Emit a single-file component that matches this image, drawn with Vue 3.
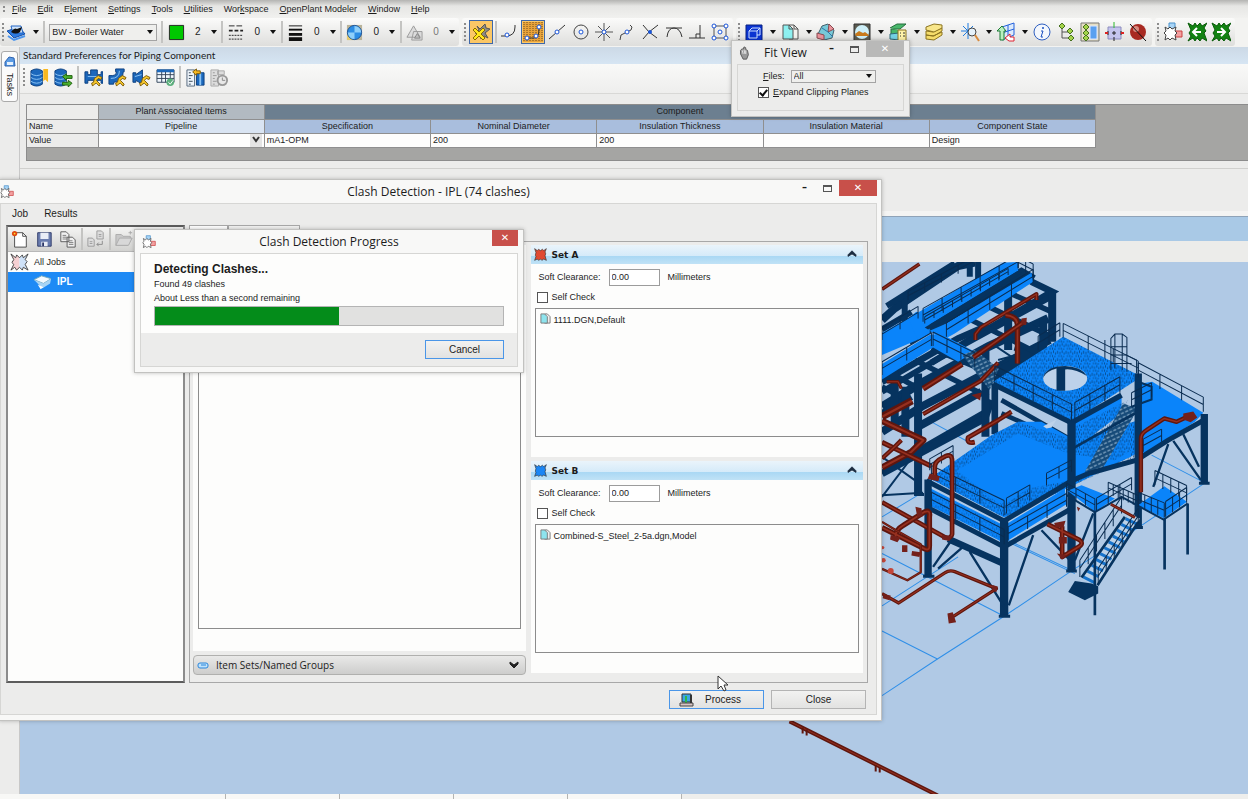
<script setup>
import { ref } from 'vue'

const menus = [
    ['', 'F', 'ile'], ['', 'E', 'dit'], ['E', 'l', 'ement'], ['', 'S', 'ettings'], ['', 'T', 'ools'],
    ['', 'U', 'tilities'], ['Wor', 'k', 'space'], ['', 'O', 'penPlant Modeler'], ['', 'W', 'indow'], ['', 'H', 'elp']
]

const attributes = [
    { icon: 'color', value: '2' },
    { icon: 'style', value: '0' },
    { icon: 'weight', value: '0' },
    { icon: 'globe', value: '0' },
    { icon: 'priority', value: '0', off: true }
]

const snaps = ['curve', 'keypoint', 'nearest', 'center', 'origin', 'bisector', 'cross', 'tangent', 'perp', 'multi']
const viewTools = ['cube', 'page', 'models', 'picture', 'levels', 'stack', 'search', 'clip']
const plainTools = ['info', 'tree', 'props', 'fence', 'stop']
const clashTools = ['clash', 'burst-left', 'burst-right']

const columns = [
    { name: 'Specification', value: 'mA1-OPM' },
    { name: 'Nominal Diameter', value: '200' },
    { name: 'Insulation Thickness', value: '200' },
    { name: 'Insulation Material', value: '' },
    { name: 'Component State', value: 'Design' }
]

const sets = ref([
    { id: 'a', title: 'Set A', color: '#e04a32', clearance: '0.00', self: false, file: '1111.DGN,Default' },
    { id: 'b', title: 'Set B', color: '#1b86f5', clearance: '0.00', self: false, file: 'Combined-S_Steel_2-5a.dgn,Model' }
])

const progress = ref(53)
const expandPlanes = ref(true)

// hand rail between two points: top rail, knee rail and posts
function rail(x1, y1, x2, y2, h, n) {
    let d = `M${x1} ${y1 - h}L${x2} ${y2 - h}M${x1} ${y1 - h / 2}L${x2} ${y2 - h / 2}`
    for (let i = 0; i <= n; i++) {
        const x = x1 + (x2 - x1) * i / n
        const y = y1 + (y2 - y1) * i / n
        d += `M${x} ${y}V${y - h}`
    }
    return d
}

function steps(x1, y1, x2, y2, w, n) {
    let d = ''
    for (let i = 0; i <= n; i++) {
        const x = x1 + (x2 - x1) * i / n
        const y = y1 + (y2 - y1) * i / n
        d += `M${x} ${y}l${w} ${w / 2}`
    }
    return d
}

const backRails = [
    rail(22, 300, 130, 235, 36, 2), rail(145, 245, 430, 85, 40, 5), rail(215, 290, 475, 130, 42, 4),
    rail(22, 405, 170, 318, 40, 2), rail(175, 318, 300, 380, 42, 3), rail(100, 180, 300, 75, 26, 4),
    rail(150, 250, 400, 105, 20, 9), rail(430, 85, 475, 108, 36, 2)
]
const frontRails = [
    rail(565, 292, 790, 405, 42, 3), rail(490, 330, 555, 290, 42, 2), rail(360, 425, 590, 540, 48, 4),
    rail(600, 535, 735, 458, 48, 3), rail(790, 412, 985, 515, 44, 3), rail(770, 500, 830, 470, 42, 2),
    rail(805, 635, 860, 605, 38, 1), rail(170, 720, 388, 825, 44, 3), rail(395, 820, 465, 780, 46, 2),
    rail(515, 735, 590, 695, 36, 2), rail(170, 800, 388, 912, 44, 3), rail(400, 900, 575, 800, 40, 3),
    rail(575, 765, 660, 812, 36, 3), rail(665, 812, 770, 750, 38, 3), rail(790, 800, 868, 832, 44, 4),
    rail(872, 830, 935, 788, 46, 3), rail(840, 735, 935, 780, 44, 4), rail(700, 760, 790, 800, 34, 6),
    rail(615, 1010, 740, 820, 50, 5), rail(670, 1030, 790, 850, 46, 5), rail(165, 690, 235, 650, 34, 2)
]

const pipes = [
    { d: 'M22 148L134 72', w: 11 },
    { d: 'M302 300V282L318 262L485 162V180', w: 12 },
    { d: 'M392 225Q428 228 428 255V370', w: 16 },
    { d: 'M296 352L452 242', w: 15 },
    { d: 'M145 446L262 372', w: 17 },
    { d: 'M145 522L318 422L370 368', w: 13 },
    { d: 'M22 530L112 482', w: 22 },
    { d: 'M36 425L70 425L80 445', w: 10 },
    { d: 'M22 542L146 600L110 635L22 682', w: 19 },
    { d: 'M22 606L170 678', w: 15 },
    { d: 'M22 655L60 620L80 600', w: 13 },
    { d: 'M180 715V682Q180 664 200 655L212 648Q232 640 232 662V882Q230 895 212 892', w: 14 },
    { d: 'M22 786L212 892', w: 14 },
    { d: 'M62 895Q60 870 85 856L150 815Q168 808 164 830V918Q164 932 150 926L22 862', w: 16 },
    { d: 'M300 606Q274 612 280 592L370 540L410 515', w: 14 },
    { d: 'M798 756V596Q798 580 815 570L868 535L905 545L950 524', w: 13 },
    { d: 'M518 852L612 898Q628 908 614 918L562 950V858', w: 14 },
    { d: 'M22 1060L72 1088L210 998Q224 988 240 994L365 1045L236 1128', w: 10 },
    { d: 'M22 986L98 1020L138 996V912L60 868L22 845', w: 7 },
    { d: 'M708 792L780 832', w: 9 }
]
</script>

<template>
    <div class="app">
        <svg class="symbols" aria-hidden="true">
            <symbol id="layers" viewBox="0 0 20 18"><path d="M1 8l7 7 11-4-6-7z" fill="#2d7be0" stroke="#174fa8" /><path d="M2 13l6 4 11-4" fill="none" stroke="#4c95ec" stroke-width="2" /><path d="M5 3h10l2 7H7z" fill="#cfe3fa" stroke="#2466c4" /><path d="M5 9q3-5 6-3l5-2-2 5q-4 3-9 0z" fill="#111" /></symbol>
            <symbol id="color" viewBox="0 0 18 18"><path d="M1.5 1.5h15v15h-15z" fill="#00c800" stroke="#222" /></symbol>
            <symbol id="style" viewBox="0 0 18 18"><path d="M2 2h15" stroke="#222" stroke-dasharray="6 2" /><path d="M2 7h15" stroke="#222" stroke-dasharray="4 2" stroke-width="2" /><path d="M2 12h15M2 16h15" stroke="#222" stroke-dasharray="2 1" /></symbol>
            <symbol id="weight" viewBox="0 0 18 18"><path d="M2 2h14" stroke="#111" /><path d="M2 6h14" stroke="#111" stroke-width="2" /><path d="M2 11h14" stroke="#111" stroke-width="3" /><path d="M2 16h14" stroke="#111" stroke-width="4" /></symbol>
            <symbol id="globe" viewBox="0 0 18 18"><path d="M1 1h16v16H1z" fill="#b9b39a" /><path d="M1 9h8v8H1z" fill="#e4ca70" /><circle cx="9" cy="9" r="7.5" fill="#2c8de4" stroke="#174f96" /><path d="M9 9V2a7 7 0 0 1 7 7zM9 9v7a7 7 0 0 1-7-7z" fill="#8fd0fa" /></symbol>
            <symbol id="priority" viewBox="0 0 18 18"><path d="M1 14L8 2l7 12zM8 8h9v9H6z" fill="#dcdcdc" stroke="#999" /><path d="M9 15l3-5 3 5z" fill="#bbb" stroke="#888" /></symbol>
            <symbol id="accudraw" viewBox="0 0 20 20"><path d="M6 4l3 3 5-5 1 4 4 1-5 4 3 5-4-2-3 3-1-5-5-1 4-3z" fill="#8b8b85" stroke="#555" /><path d="M2 8l2-2 4 4 4-4 2 2-4 4 4 4-2 2-4-4-4 4-2-2 4-4z" fill="#ffe719" stroke="#8a6a00" /></symbol>
            <symbol id="curve" viewBox="0 0 20 20"><path d="M2 14h5q9 0 9-9V3" fill="none" stroke="#333" /><circle cx="8" cy="13" r="2" fill="#fff" stroke="#1b55d8" stroke-width="1" /></symbol>
            <symbol id="keypoint" viewBox="0 0 20 20"><path d="M0 0h20v20H0z" fill="#e9a33a" /><path d="M1 0v20M4 0v20M7 0v20M10 0v20M13 0v20M16 0v20M19 0v20" stroke="#6b4c1e" stroke-dasharray="1 1" /><path d="M3 16h8q5 0 5-9" fill="none" stroke="#333" /><circle cx="4" cy="16" r="2" fill="#fff" stroke="#1b55d8" /><circle cx="13" cy="14" r="2" fill="#fff" stroke="#1b55d8" /><circle cx="16" cy="5" r="2" fill="#fff" stroke="#1b55d8" /></symbol>
            <symbol id="nearest" viewBox="0 0 20 20"><path d="M2 17L18 3" stroke="#333" /><circle cx="10" cy="10" r="2" fill="#fff" stroke="#1b55d8" /></symbol>
            <symbol id="center" viewBox="0 0 20 20"><circle cx="10" cy="10" r="7" fill="none" stroke="#444" /><circle cx="10" cy="10" r="2" fill="#fff" stroke="#1b55d8" /></symbol>
            <symbol id="origin" viewBox="0 0 20 20"><path d="M10 1v18M1 10h18M4 4l12 12M16 4L4 16" stroke="#555" /><circle cx="10" cy="10" r="2" fill="#fff" stroke="#1b55d8" /></symbol>
            <symbol id="bisector" viewBox="0 0 20 20"><path d="M3 18l1-5 6-3 4-2 1-3-2-2" fill="none" stroke="#444" /><circle cx="10" cy="10" r="2" fill="#fff" stroke="#1b55d8" /></symbol>
            <symbol id="cross" viewBox="0 0 20 20"><path d="M3 3l6 7 8 6M18 3l-9 7-6 7" fill="none" stroke="#333" /><circle cx="10" cy="10" r="1" fill="#fff" stroke="#1b55d8" stroke-width="2" /></symbol>
            <symbol id="tangent" viewBox="0 0 20 20"><path d="M2 6h16M3 15q1-9 7-9t8 9" fill="none" stroke="#333" /></symbol>
            <symbol id="perp" viewBox="0 0 20 20"><path d="M2 16h16M13 3v13M9 16v-4h4" fill="none" stroke="#333" /></symbol>
            <symbol id="multi" viewBox="0 0 20 20"><path d="M4 4h12v12H4z" fill="none" stroke="#555" /><g fill="#fff" stroke="#1b55d8"><circle cx="4" cy="4" r="2" /><circle cx="16" cy="4" r="2" /><circle cx="4" cy="16" r="2" /><circle cx="16" cy="16" r="2" /><circle cx="10" cy="10" r="2" /></g></symbol>
            <symbol id="cube" viewBox="0 0 20 20"><path d="M2 3h16v16H2z" fill="#0b34d2" stroke="#08207e" /><path d="M5 9h8v7H5zM8 6h8v7h-3M5 9l3-3M13 9l3-3" fill="none" stroke="#cfe0ff" /></symbol>
            <symbol id="page" viewBox="0 0 20 20"><path d="M9 3h5l4 4v10H9z" fill="#f2f2ee" stroke="#555" /><path d="M3 3h6l4 4v10H3z" fill="#8df0f0" stroke="#555" /><path d="M9 3v4h4M14 3v4h4" fill="none" stroke="#555" /></symbol>
            <symbol id="models" viewBox="0 0 20 20"><path d="M2 12l4-8 6-2 6 6-2 8-8 2z" fill="#78c9d8" stroke="#40606c" /><path d="M1 11l7 2v5l-7-2zM13 2l5 5-6 3z" fill="#e9939b" stroke="#884a50" /><path d="M6 6l6 4 5 5" fill="none" stroke="#2a75aa" /></symbol>
            <symbol id="picture" viewBox="0 0 20 20"><path d="M2 2h16v17H2z" fill="#5b5b50" stroke="#333" /><circle cx="10" cy="10" r="7" fill="#cdeff8" /><path d="M3 12l4-3 4 2 2-1 4 3-1 1H4z" fill="#c87a1c" /></symbol>
            <symbol id="levels" viewBox="0 0 20 20"><path d="M2 6l7-4h9l-6 5H3v6l9 1 6-4" fill="#48b76a" stroke="#246c3c" /><path d="M2 12l9-1v7l-9-1z" fill="#74d2e4" stroke="#2f6878" /><path d="M10 8h8v11h-8z" fill="#fff3a8" stroke="#8a7420" /><path d="M12 11h1M15 11h2M12 14h1M15 14h2" stroke="#333" /></symbol>
            <symbol id="stack" viewBox="0 0 20 20"><path d="M2 13l7 1 9-4v3l-8 5-8-1zM2 9l7 1 9-4v3l-8 5-8-1z" fill="#f5dc6a" stroke="#8c7420" /><path d="M2 5l8-3 8 1v3l-8 4-8-2z" fill="#f8e68a" stroke="#8c7420" /></symbol>
            <symbol id="search" viewBox="0 0 20 20"><path d="M8 1v16M1 9h14M3 4l10 10M13 4L3 14" stroke="#1d7be0" /><circle cx="12" cy="10" r="4" fill="#e6f2fb" stroke="#444" /><path d="M15 13l4 6" stroke="#d88a3c" stroke-width="2" /></symbol>
            <symbol id="clip" viewBox="0 0 20 20"><path d="M6 5l12-4v12L6 18zM6 11l12-4M12 3v13" fill="#dceafb" stroke="#2463dc" /><path d="M6 4L1 9h3v9h4V9h2z" fill="#baf0c0" stroke="#1c7a34" /><path d="M9 16l5-4v3h4v4h-5z" fill="#fff" stroke="#d23" /></symbol>
            <symbol id="info" viewBox="0 0 20 20"><circle cx="10" cy="10" r="8" fill="#f3f7fd" stroke="#2f5fc0" /><circle cx="11" cy="6" r="1" fill="#1b50c0" /><path d="M9 9h2l-2 6h2" fill="none" stroke="#1b50c0" /></symbol>
            <symbol id="tree" viewBox="0 0 20 20"><path d="M6 4v12h8M6 10h8" fill="none" stroke="#555" /><path d="M3 4l3-3 3 3-3 3zM11 9l3-3 3 3-3 3zM12 16l3-3 3 3-3 3z" fill="#a4d34a" stroke="#46701e" /></symbol>
            <symbol id="props" viewBox="0 0 20 20"><path d="M1 1h18v18H1z" fill="#e6dfc4" stroke="#777" /><path d="M10 4h7v13h-7z" fill="#5aa0f0" stroke="#dce6ff" /><path d="M3 5l3-3 3 3-3 3zM3 11l3-3 3 3-3 3zM3 16l3-3 3 3-3 3z" fill="#a4d34a" stroke="#46701e" /></symbol>
            <symbol id="fence" viewBox="0 0 20 20"><path d="M4 5h13v12H4z" fill="#c4c4ee" stroke="#8b8bbe" /><path d="M10 0v6" stroke="#2db82d" /><path d="M10 15v4M4 9v4M17 9v4M8 11h4M10 9v4" stroke="#222" /><path d="M1 11h3M17 11h3" stroke="#d22" stroke-width="2" /></symbol>
            <symbol id="stop" viewBox="0 0 20 20"><circle cx="10" cy="10" r="8" fill="#a82a22" /><circle cx="8" cy="7" r="3" fill="#da8a80" /><path d="M2 2l16 17" stroke="#111" stroke-width="1" /></symbol>
            <symbol id="clash" viewBox="0 0 20 20"><path d="M6 1h6v7H6z" fill="#a8d4f6" stroke="#4a92cc" /><path d="M12 9h7v6h-7z" fill="#f4a0a0" stroke="#ca4040" /><path d="M2 5l3 2 2-2 2 2 4-2-1 4 2 2-2 2 1 5-4-2-2 2-2-2-3 2 1-5-2-2 2-2z" fill="#fff" stroke="#444" /></symbol>
            <symbol id="burst-left" viewBox="0 0 20 20"><path d="M1 1l5 3 2-3 2 3 3-3 2 3 5-3-3 5 2 3-2 2 3 8-5-3-2 3-3-3-2 3-2-3-5 3 3-5-2-3 2-3z" fill="#128212" stroke="#0a5c0a" /><path d="M14 10H6M10 6l-4 4 4 4" fill="none" stroke="#fff" stroke-width="2" /></symbol>
            <symbol id="burst-right" viewBox="0 0 20 20"><path d="M1 1l5 3 2-3 2 3 3-3 2 3 5-3-3 5 2 3-2 2 3 8-5-3-2 3-3-3-2 3-2-3-5 3 3-5-2-3 2-3z" fill="#128212" stroke="#0a5c0a" /><path d="M6 10h8M10 6l4 4-4 4" fill="none" stroke="#fff" stroke-width="2" /></symbol>
            <symbol id="burst" viewBox="0 0 20 20"><path d="M1 1l4 3 2-2 3 2 3-2 2 2 4-3-2 5 1 3-1 3 2 7-4-2-3 2-2-2-3 2-2-2-4 2 2-6-1-2 1-4z" stroke="#333" /></symbol>
            <symbol id="all-jobs" viewBox="0 0 20 20"><path d="M1 1l5 4 1-3 3 3V15l-3 3-2-3-4 3 3-6-2-2 2-3z" fill="#f6d0d2" /><path d="M10 5l3-3 1 3 5-4-3 6 2 2-2 3 3 6-5-3-1 3-3-3z" fill="#cfe2f8" /><path d="M1 1l5 4 1-3 3 3 3-3 1 3 5-4-3 6 2 2-2 3 3 6-5-3-1 3-3-3-3 3-2-3-4 3 3-6-2-2 2-3z" fill="none" stroke="#444" /></symbol>
            <symbol id="db" viewBox="0 0 20 20"><path d="M1 3q6-4 12 0v14q-6 4-12 0z" fill="#1c68bc" stroke="#0c3f80" /><path d="M1 6q6 4 12 0M1 10q6 4 12 0M1 14q6 4 12 0" fill="none" stroke="#8cc4f4" /></symbol>
            <symbol id="db-mark" viewBox="0 0 20 20"><use href="#db" /><path d="M14 1h5v14l-3-3-2 2z" fill="#f8b820" /></symbol>
            <symbol id="db-sync" viewBox="0 0 20 20"><use href="#db" /><path d="M9 9l4-3v2h6v3h-6v2zM19 16l-4-3v2H9v3h6v2z" fill="#48b02c" stroke="#226010" /></symbol>
            <symbol id="wrench" viewBox="0 0 20 20"><path d="M9 19l-1-3 2-1 1-4 4-3 4 2-1 2-3-1-2 2 4 4-1 2-3-3-2 1z" fill="#f8c82c" stroke="#7a5a08" /></symbol>
            <symbol id="tee" viewBox="0 0 20 20"><path d="M1 4h3v3h3V2h7v5h4V4h2v12h-2v-3H4v3H1z" fill="#1c68bc" stroke="#0c3f80" /><path d="M4 9h13" stroke="#8cc4f4" /><use href="#wrench" /></symbol>
            <symbol id="elbow" viewBox="0 0 20 20"><path d="M8 1h9v3h-1q0 11-10 11v2H1V8h4q4 0 4-4H8z" fill="#1c68bc" stroke="#0c3f80" /><path d="M3 11q9 0 9-8" fill="none" stroke="#8cc4f4" /><use href="#wrench" /></symbol>
            <symbol id="reducer" viewBox="0 0 20 20"><path d="M1 5h3v2l7-5v15l-7-4v2H1z" fill="#1c68bc" stroke="#0c3f80" /><path d="M3 9l7-2" stroke="#8cc4f4" /><use href="#wrench" /></symbol>
            <symbol id="grid-ok" viewBox="0 0 20 20"><path d="M1 2h18v13H1z" fill="#f2f8fe" stroke="#34465c" /><path d="M1 3h18" stroke="#1c68bc" stroke-width="3" /><path d="M1 7h18M1 11h18M6 4v11M10 4v11M15 4v11" stroke="#34465c" /><circle cx="15" cy="15" r="4" fill="#5bae7c" /><path d="M13 15l2 2 3-4" fill="none" stroke="#fff" /></symbol>
            <symbol id="ruler" viewBox="0 0 20 20"><path d="M1 2h8v17H1z" fill="#eef4fa" stroke="#54687c" /><path d="M3 5h2M3 8h4M3 11h2M3 14h4M3 17h2" stroke="#345" /><path d="M11 5h8v13h-8z" fill="#1c68bc" stroke="#0c3f80" /><path d="M15 5v13" stroke="#8cc4f4" stroke-width="2" /><path d="M7 4l4-3v2h4v3h-4v2z" fill="#f8b820" stroke="#7a5a08" /></symbol>
            <symbol id="ruler-off" viewBox="0 0 20 20"><path d="M1 2h8v17H1zM8 3h7v4H8z" fill="#ddd" stroke="#aaa" /><path d="M3 5h2M3 8h4M3 11h2M3 14h4M3 17h2" stroke="#999" /><circle cx="13" cy="13" r="5" fill="#e8e8e8" stroke="#999" stroke-width="2" /><path d="M13 10v3h3" fill="none" stroke="#888" /></symbol>
            <symbol id="new" viewBox="0 0 20 20"><path d="M4 3h9l4 4v12H4z" fill="#fff" stroke="#444" /><path d="M13 3v4h4" fill="none" stroke="#444" /><circle cx="4" cy="4" r="2" fill="#ffdc30" stroke="#e04a10" stroke-width="2" /></symbol>
            <symbol id="save" viewBox="0 0 20 20"><path d="M3 3h15v15H3z" fill="#6a7cae" stroke="#2a3566" /><path d="M6 3h9v7H6zM7 13h7v5H7z" fill="#e9edf6" /><path d="M8 14h2v4H8z" fill="#2a3566" /></symbol>
            <symbol id="copy" viewBox="0 0 20 20"><path d="M2 2h6l3 3v8H2zM9 8h6l3 3v8H9z" fill="#f0f0f0" stroke="#555" /><path d="M4 6h4M4 8h5M4 10h5M11 12h4M11 14h5M11 16h5" stroke="#777" /></symbol>
            <symbol id="replace" viewBox="0 0 20 20"><path d="M1 9h5l2 2v7H1zM11 1h5l2 2v7h-7z" fill="#ddd" stroke="#999" /><path d="M3 13h3M3 15h3M13 5h3M13 7h3" stroke="#999" /><path d="M17 12v4h-6M13 14l-2 2 2 2" fill="none" stroke="#888" /></symbol>
            <symbol id="folder" viewBox="0 0 20 20"><path d="M1 5h6l2 2h8v2l-3 8H1z" fill="#c8c8c8" stroke="#aaa" /><path d="M1 17L5 9h14l-4 8z" fill="#d8d8d8" stroke="#aaa" /><path d="M17 1v4M15 3h4" stroke="#aaa" /></symbol>
            <symbol id="job" viewBox="0 0 20 16"><path d="M1 5l8-4 10 3-8 5z" fill="#f4faff" stroke="#7ab" /><path d="M1 5l10 4 8-5-1 5-8 5z" fill="#a8d4f4" /><path d="M8 15l-3-5 6 3z" fill="#fff" /></symbol>
            <symbol id="file" viewBox="0 0 12 12"><path d="M5 1h3l3 3v7H5z" fill="#eee" stroke="#777" /><path d="M1 1h4l3 3v7H1z" fill="#8ee4ee" stroke="#777" /></symbol>
            <symbol id="run" viewBox="0 0 16 14"><path d="M3 1h9v8H3z" fill="#3ba6e4" stroke="#333" /><path d="M6 3h2v8H6z" fill="#2fb84a" /><path d="M1 10h13v3H1z" fill="#d8c4c4" stroke="#444" /><path d="M12 2v8" stroke="#333" stroke-width="2" /></symbol>
        </svg>

        <nav class="menubar">
            <span class="grip"></span>
            <a v-for="m in menus" :key="m[2]" href="#">{{ m[0] }}<u>{{ m[1] }}</u>{{ m[2] }}</a>
        </nav>

        <div class="toolbars">
            <div class="bar attrs">
                <span class="grip"></span>
                <button class="tool" aria-label="Levels"><svg><use href="#layers" /></svg></button>
                <i class="arrow"></i>
                <span class="sep"></span>
                <span class="pick level">
                    <select aria-label="Active level"><option>BW - Boiler Water</option></select>
                    <i class="arrow"></i>
                </span>
                <template v-for="a in attributes" :key="a.icon">
                    <span class="sep"></span>
                    <button class="attr" :class="{ off: a.off }" :aria-label="a.icon">
                        <svg><use :href="'#' + a.icon" /></svg>
                        <span>{{ a.value }}</span>
                        <i class="arrow"></i>
                    </button>
                </template>
            </div>
            <div class="bar snaps">
                <span class="grip"></span>
                <button class="tool on" aria-label="accudraw"><svg><use href="#accudraw" /></svg></button>
                <span class="sep"></span>
                <button v-for="s in snaps" :key="s" class="tool" :class="{ on: s === 'keypoint' }" :aria-label="s">
                    <svg><use :href="'#' + s" /></svg>
                </button>
            </div>
            <div class="bar">
                <span class="grip"></span>
                <button v-for="t in viewTools" :key="t" class="tool drop" :aria-label="t">
                    <svg><use :href="'#' + t" /></svg><i class="arrow"></i>
                </button>
                <button v-for="t in plainTools" :key="t" class="tool" :aria-label="t"><svg><use :href="'#' + t" /></svg></button>
            </div>
            <div class="bar">
                <span class="grip"></span>
                <button v-for="t in clashTools" :key="t" class="tool" :aria-label="t"><svg><use :href="'#' + t" /></svg></button>
            </div>
        </div>

        <div class="workspace">
            <aside class="rail">
                <button class="tasks"><svg viewBox="0 0 12 12"><path d="M1 6l4-5 5 1 1 8H1z" fill="#5b9be4" stroke="#2c62b0" /><path d="M3 6h6v3H3z" fill="#e6f1fd" /></svg><span>Tasks</span></button>
            </aside>
            <main class="content">
                <h1 class="heading">Standard Preferences for Piping Component</h1>
                <div class="prefs">
                    <span class="grip"></span>
                    <button v-for="t in ['db-mark', 'db-sync']" :key="t" class="tool" :aria-label="t"><svg><use :href="'#' + t" /></svg></button>
                    <span class="sep"></span>
                    <button v-for="t in ['tee', 'elbow', 'reducer', 'grid-ok']" :key="t" class="tool" :aria-label="t"><svg><use :href="'#' + t" /></svg></button>
                    <span class="sep"></span>
                    <button v-for="t in ['ruler', 'ruler-off']" :key="t" class="tool" :aria-label="t"><svg><use :href="'#' + t" /></svg></button>
                </div>
                <div class="sheet">
                    <table>
                        <thead>
                            <tr>
                                <th class="row"></th>
                                <th class="plant">Plant Associated Items</th>
                                <th class="comp" colspan="5">Component</th>
                            </tr>
                            <tr>
                                <th class="row">Name</th>
                                <th class="pipe">Pipeline</th>
                                <th v-for="c in columns" :key="c.name" class="col">{{ c.name }}</th>
                            </tr>
                        </thead>
                        <tbody>
                            <tr>
                                <th class="row">Value</th>
                                <td><div class="cell"><button aria-label="Choose pipeline"><svg viewBox="0 0 8 8"><path d="M1 2l3 4 3-4" fill="none" stroke="#333" stroke-width="2" /></svg></button></div></td>
                                <td v-for="c in columns" :key="c.name">{{ c.value }}</td>
                            </tr>
                        </tbody>
                    </table>
                </div>
                <div class="lower"></div>
                <div class="viewtitle"></div>
                <div class="viewbar"></div>
                <svg class="scene" viewBox="21 262 1227 532" preserveAspectRatio="xMinYMin slice">
                    <defs>
                        <pattern id="grate" width="26" height="22" patternUnits="userSpaceOnUse">
                            <path d="M2 2v9M9 5v8M16 1v8M22 7v7M6 15v6M13 15v6M20 17v5" stroke="#06386c" stroke-width="2" />
                        </pattern>
                        <pattern id="tread" width="14" height="12" patternUnits="userSpaceOnUse" patternTransform="rotate(-25)">
                            <path d="M0 0h14v12H0z" fill="#164a78" />
                            <path d="M1 2h9v5H1z" fill="#6c93b4" />
                        </pattern>
                    </defs>
                    <g transform="translate(875 240) scale(.33333)">
                        <g class="ground">
                            <path d="M22 1366L188 1256L388 1128L590 992L790 862L990 728" />
                            <path d="M22 1172L188 1256M22 940L388 1128M22 1097L250 950M400 900L590 990M830 645L990 728M160 540L280 605M22 830L130 765M600 1000L400 905" />
                        </g>
                        <g class="steel">
                            <path d="M22 240L60 205L250 78L300 68" stroke-width="24" />
                            <path d="M36 198L240 70M22 268L110 216" stroke-width="18" />
                            <path d="M310 66V180M285 66V110M90 180V250" stroke-width="18" />
                            <path d="M100 300L440 100L475 120" stroke-width="32" />
                            <path d="M470 125L532 155L300 290L170 368" stroke-width="20" />
                            <path d="M22 455L200 350L525 172" stroke-width="18" />
                            <path d="M22 500L120 440L340 320L520 235" stroke-width="26" />
                            <path d="M22 575L140 500L350 390L525 300" stroke-width="24" />
                            <path d="M130 560L320 455M130 635L330 520" stroke-width="24" />
                            <path d="M22 700L330 535L350 480" stroke-width="22" />
                            <path d="M22 425L250 295L330 260M22 520L110 470" stroke-width="20" />
                            <path d="M420 320L500 345L355 425M360 400L500 320" stroke-width="24" />
                            <path d="M340 130L530 215M300 180L530 290M260 225L500 345M170 325L420 430M120 360L340 470M50 400L140 450M22 440L80 470" stroke-width="16" />
                            <path d="M532 152V305M505 240V330M332 320V590M130 400V765M400 150V330M60 380V560M92 440V590" stroke-width="24" />
                            <path d="M22 770L120 640M22 650L120 720M22 765L145 758M370 360L425 345M350 310L440 370" stroke-width="6" />
                        </g>
                        <path class="deck" d="M22 278L98 236L385 68L430 66V92L150 262L128 300L22 345z" />
                        <path class="deck" d="M215 250L470 98L475 125L240 280L205 300L165 272z" />
                        <path class="deck" d="M22 372L165 284L200 282L300 335L250 365L175 322L22 418z" />
                        <path class="deck" d="M100 235L125 215L165 240V280L130 300z" />
                        <path class="steel-fill" d="M150 262L430 92L440 100L215 240L160 268z" />
                        <path d="M262 345L300 330L372 385L345 450z" fill="url(#tread)" />
                        <path v-for="(d, i) in backRails" :key="i" class="wire" :d="d" />
                        <g v-for="(p, i) in pipes.slice(0, 11)" :key="'b' + i" class="pipe-run">
                            <path :d="p.d" :stroke-width="p.w" /><path class="shine" :d="p.d" :stroke-width="p.w / 3" />
                        </g>

                        <g class="steel">
                            <path d="M360 430V582" stroke-width="20" />
                            <path d="M380 480L590 600M380 520L470 560L590 630" stroke-width="14" />
                        </g>
                        <path class="deck" d="M165 715L350 585L430 545L500 545L600 600L790 540L785 640L590 738L388 832z" />
                        <path d="M165 715L350 585L430 545L600 600L790 540L785 650L590 738L388 832z" fill="url(#grate)" />
                        <path class="deck" d="M248 690L430 580L580 640L720 660L770 630L768 650L590 720L460 745L395 790L370 790z" />
                        <path class="hole" d="M505 558L545 538L530 562L515 565z" />
                        <path class="deck" d="M590 555L740 470V520L600 625z" />
                        <path d="M600 560L760 480L690 590L600 620z" fill="url(#grate)" />
                        <path class="deck" d="M798 430L832 425L985 518L960 545L800 648z" />
                        <path class="deck" d="M168 745L388 856L570 745L575 792L388 908L168 798z" />
                        <path d="M168 750L388 860V905L168 798z" fill="url(#grate)" opacity=".6" />
                        <path class="deck" d="M565 290L800 410L735 452L590 545L355 425z" />
                        <path d="M565 290L800 410L735 452L590 545L355 425z" fill="url(#grate)" />
                        <ellipse class="hole" cx="571" cy="415" rx="66" ry="37" />
                        <path class="steel-fill" d="M505 412Q515 378 571 378Q620 380 636 408Q600 385 571 388V452H545V385Q515 392 505 412z" />
                        <path d="M745 490L790 505L680 690L630 695z" fill="url(#tread)" />
                        <g class="steel">
                            <path d="M355 432L590 548L740 465" stroke-width="16" />
                            <path d="M770 500L830 478V440L790 425" stroke-width="6" />
                            <path d="M155 722L388 842L590 722L640 700L785 660L880 600L990 538" stroke-width="15" />
                            <path d="M155 800L388 920L585 808" stroke-width="15" />
                            <path d="M585 630L780 520" stroke-width="8" />
                            <path d="M590 545V992M388 835V1128" stroke-width="25" />
                            <path d="M160 718V1008M790 400V862M988 522V730" stroke-width="22" />
                            <path d="M220 896L385 970" stroke-width="20" />
                            <path d="M388 1100L285 935M402 1095L475 885M500 870L590 965M190 985L262 922M175 980L230 900M655 820L600 960M880 612L835 740M895 602L978 720M925 582L972 680" stroke-width="7" />
                            <path d="M372 1128h34M574 992h32M145 1008h34M774 862h30M972 729h32M118 763h30" stroke-width="9" />
                        </g>
                        <path class="deck" d="M578 752L620 735L720 775L660 815z" />
                        <path class="deck" d="M790 795L868 738L936 785L866 834z" />
                        <path d="M765 820L795 835L668 1035L618 1015z" fill="#bcd2e8" />
                        <g class="treads"><path :d="steps(752, 835, 625, 1010, 34, 10)" /></g>
                        <g class="steel">
                            <path d="M750 830L620 1012M790 845L668 1035" stroke-width="8" />
                            <path d="M660 812V1125M869 835V988M938 790V943" stroke-width="8" />
                            <path d="M575 765L660 816L740 770L866 838L938 790" stroke-width="6" />
                        </g>
                        <path class="steel-fill" d="M580 1055L600 1022L650 1030L670 1038V1060L630 1080z" />
                        <path v-for="(d, i) in frontRails" :key="'f' + i" class="wire" :d="d" />
                        <path class="wire" d="M708 390V295L720 282H742L756 292V395M720 282V385M742 282V390M690 300V355M708 320H756M708 345H756M708 370H770M755 345L785 360V400" />
                        <g v-for="(p, i) in pipes.slice(11)" :key="'p' + i" class="pipe-run">
                            <path :d="p.d" :stroke-width="p.w" /><path class="shine" :d="p.d" :stroke-width="p.w / 3" />
                        </g>
                        <g class="flange">
                            <path d="M925 520l30-6 12 18-20 14-22-8zM165 700l30 8-4 16-32-8zM218 1120l16-4 10 30-22 4zM538 848l34-6-6 20h-24zM48 884l30 8-10 14-22-8zM202 884l30 4-8 14-22-4zM440 235l16-2-2 22-14-2zM552 890h24v20h-24zM546 940l30 4-14 14zM355 1035l14 4-4 16-14-4zM112 932l26 4-4 14-24-4zM82 915h16v20h-16zM26 1062l22 4-4 14-20-6zM122 800l18 4 4 24-16 4zM290 465l30-8-4 24zM606 800l10 4-6 10z" />
                            <circle cx="48" cy="992" r="9" fill="#c4473a" /><circle cx="26" cy="960" r="7" fill="#c4473a" /><circle cx="24" cy="922" r="5" fill="#c4473a" />
                        </g>
                    </g>
                    <g class="pipe-run">
                        <path d="M790 721L938 795" stroke-width="4" /><path class="shine" d="M790 721L938 795" stroke-width="1" />
                        <path d="M803 727v6M807 729v6M876 765v6M880 767v5" stroke-width="2" />
                    </g>
                </svg>
            </main>
        </div>
        <footer class="status"><span></span><span></span><span></span><span></span><span></span></footer>

        <section class="window clash">
            <header>
                <svg class="winicon"><use href="#clash" /></svg>
                <h2>Clash Detection - IPL (74 clashes)</h2>
                <div class="winbtns">
                    <button aria-label="Minimize">&#8211;</button>
                    <button aria-label="Maximize"><i class="box"></i></button>
                    <button class="close" aria-label="Close window">&#10005;</button>
                </div>
            </header>
            <div class="inner">
                <nav class="jobmenu"><a href="#">Job</a><a href="#">Results</a></nav>
                <div class="panes">
                    <div class="jobs">
                        <div class="jobtools">
                            <button v-for="t in ['new', 'save', 'copy']" :key="t" class="tool" :aria-label="t"><svg><use :href="'#' + t" /></svg></button>
                            <span class="sep"></span>
                            <button class="tool" aria-label="replace"><svg><use href="#replace" /></svg></button>
                            <span class="sep"></span>
                            <button class="tool" aria-label="folder"><svg><use href="#folder" /></svg></button>
                        </div>
                        <ul>
                            <li><svg><use href="#all-jobs" /></svg>All Jobs</li>
                            <li class="picked"><svg><use href="#job" /></svg>IPL</li>
                        </ul>
                    </div>
                    <div class="tabs">
                        <div class="tabrow"><span></span><span></span></div>
                        <div class="tabbody">
                            <div class="left">
                                <div class="card grow">
                                    <div class="list"></div>
                                </div>
                                <button class="groups">
                                    <svg viewBox="0 0 12 8"><rect x="1" y="2" width="10" height="5" rx="2" fill="#bfe2fb" stroke="#2b86dc" /><path d="M4 4h5" stroke="#2b86dc" /></svg>
                                    <span>Item Sets/Named Groups</span>
                                    <svg viewBox="0 0 12 10"><path d="M2 2l4 3 4-3v2L6 8 2 4z" fill="#222" stroke="#222" /></svg>
                                </button>
                            </div>
                            <div class="right">
                                <div v-for="s in sets" :key="s.id" class="card set">
                                    <div class="sethead">
                                        <svg :fill="s.color"><use href="#burst" /></svg>
                                        <h3>{{ s.title }}</h3>
                                        <button aria-label="Collapse"><svg viewBox="0 0 12 10"><path d="M1 8l5-3 5 3V6L6 1 1 6z" fill="#1c2c40" stroke="#1c2c40" /></svg></button>
                                    </div>
                                    <div class="line">
                                        <label :for="'c' + s.id">Soft Clearance:</label>
                                        <input :id="'c' + s.id" v-model="s.clearance" type="text">
                                        <span>Millimeters</span>
                                    </div>
                                    <label class="tick"><input v-model="s.self" type="checkbox">Self Check</label>
                                    <div class="list"><svg><use href="#file" /></svg><span>{{ s.file }}</span></div>
                                </div>
                            </div>
                        </div>
                    </div>
                </div>
                <div class="actions">
                    <button class="push main"><svg><use href="#run" /></svg><span>Process</span></button>
                    <button class="push">Close</button>
                </div>
            </div>
        </section>

        <section class="window progress">
            <header>
                <svg class="winicon"><use href="#clash" /></svg>
                <h2>Clash Detection Progress</h2>
                <div class="winbtns"><button class="close" aria-label="Close window">&#10005;</button></div>
            </header>
            <div class="inner">
                <div class="report">
                    <h3>Detecting Clashes...</h3>
                    <p>Found 49 clashes</p>
                    <p>About Less than a second remaining</p>
                    <div class="meter" role="progressbar" :aria-valuenow="progress"><i :style="{ width: progress + '%' }"></i></div>
                </div>
                <div class="actions"><button class="push main">Cancel</button></div>
            </div>
        </section>

        <section class="window fit">
            <header>
                <svg class="winicon" viewBox="0 0 12 16"><path d="M5 15L2 9V5l2-2 1 1 1-3 2 1v2l2 1 1 5-2 5z" fill="#999" stroke="#555" /><path d="M4 5l1 4M6 4l1 5M8 5v4" stroke="#eee" /></svg>
                <h2>Fit View</h2>
                <div class="winbtns">
                    <button aria-label="Minimize">&#8211;</button>
                    <button aria-label="Maximize"><i class="box"></i></button>
                    <button class="close" aria-label="Close window">&#10005;</button>
                </div>
            </header>
            <div class="inner">
                <div class="line">
                    <label for="files"><u>F</u>iles:</label>
                    <span class="pick"><select id="files"><option>All</option></select><i class="arrow"></i></span>
                </div>
                <label class="tick"><input v-model="expandPlanes" type="checkbox"><span><u>E</u>xpand Clipping Planes</span></label>
            </div>
        </section>

        <svg class="pointer" viewBox="0 0 12 17"><path d="M1 1v13l3-3 3 5 2-1-2-5h4z" fill="#fff" stroke="#333" /></svg>
    </div>
</template>

<style>
body {
    margin: 0;
    overflow: hidden;
}
</style>

<style scoped>
.app {
    position: relative;
    display: flex;
    flex-direction: column;
    height: 100vh;
    background: #ececeb;
    font-family: "Liberation Sans", Arial, sans-serif;
    font-size: 9px;
    line-height: 14px;
    white-space: nowrap;
    color: #1c1c1c;
}
.app * {
    box-sizing: border-box;
}
.symbols {
    position: absolute;
    width: 0;
    height: 0;
}
button, input, select {
    margin: 0;
    padding: 0;
    border: 0;
    background: none;
    font: inherit;
    color: inherit;
}
a {
    color: inherit;
    text-decoration: none;
}
h1, h2, h3, p, ul {
    margin: 0;
    padding: 0;
    font-weight: 400;
    list-style: none;
}
svg {
    flex: none;
}

.menubar {
    display: flex;
    align-items: center;
    gap: 11px;
    height: 18px;
    padding-left: 3px;
    background: linear-gradient(#b4b4b2, #e6e6e4 6px, #f1f1ef);
}
.menubar .grip {
    height: 6px;
    margin-right: -4px;
}
.grip {
    flex: none;
    width: 2px;
    height: 18px;
    margin-right: 2px;
    background: repeating-linear-gradient(#8c8c8c 0 2px, transparent 2px 4px);
}
.sep {
    flex: none;
    width: 2px;
    height: 22px;
    background: #c4c4c2;
}
.arrow {
    flex: none;
    width: 0;
    height: 0;
    border: 3px solid transparent;
    border-top: 4px solid #111;
    border-bottom: 0;
}
.toolbars {
    display: flex;
    gap: 3px;
    height: 29px;
    background: #f3f3f1;
}
.bar {
    display: flex;
    align-items: center;
    height: 28px;
    padding: 0 2px;
    border-radius: 3px;
    background: linear-gradient(#fbfbfa, #dededc);
}
.attrs {
    width: 459px;
    padding-right: 4px;
    justify-content: space-between;
}
.attrs .grip {
    margin-right: -4px;
}
.snaps {
    width: 271px;
    justify-content: space-between;
}
.tool {
    display: flex;
    flex: none;
    align-items: center;
    justify-content: center;
    width: 24px;
    height: 24px;
}
.tool svg {
    width: 20px;
    height: 20px;
}
.tool.drop {
    width: 36px;
    gap: 6px;
}
.snaps .tool {
    width: 22px;
}
.snaps .tool.on {
    width: 24px;
    border: 1px solid #3f68a8;
    background: #fbc766;
}
.attr {
    display: flex;
    align-items: center;
    justify-content: space-between;
    width: 49px;
    font-size: 10px;
}
.attr svg {
    width: 17px;
    height: 17px;
}
.attr.off {
    color: #777;
}
.pick {
    position: relative;
    display: flex;
    align-items: center;
}
.pick select {
    width: 100%;
    height: 17px;
    padding-left: 2px;
    border: 1px solid #a4a4a4;
    appearance: none;
    background: #efefed;
}
.pick .arrow {
    position: absolute;
    right: 4px;
    pointer-events: none;
}
.level {
    width: 108px;
}

.workspace {
    display: flex;
    flex: 1;
    min-height: 0;
}
.rail {
    flex: none;
    width: 20px;
    padding: 4px 0 0 1px;
    border-right: 1px solid #c8c8c8;
}
.tasks {
    display: flex;
    flex-direction: column;
    align-items: center;
    gap: 5px;
    width: 17px;
    height: 51px;
    padding-top: 4px;
    border: 1px solid #aaa;
    border-radius: 3px;
    background: #fbfbfb;
}
.tasks svg {
    width: 12px;
    height: 12px;
}
.tasks span {
    writing-mode: vertical-rl;
}
.content {
    display: flex;
    flex: 1;
    flex-direction: column;
    min-width: 0;
}
.heading {
    height: 17px;
    padding-left: 3px;
    background: linear-gradient(#ccd9e6, #d6e5f3);
    font-family: Lato, sans-serif;
    font-size: 10px;
    line-height: 16px;
}
.prefs {
    display: flex;
    align-items: center;
    height: 30px;
    padding: 0 0 3px 3px;
    border-bottom: 1px solid #d8d8d6;
    background: linear-gradient(#f9f9f8, #eeeeed);
}
.prefs .sep {
    margin: 0 2px;
}
.prefs .tool svg {
    width: 19px;
    height: 19px;
}
.sheet {
    height: 57px;
    margin: 10px 0 7px 6px;
    border: 1px solid #8c8c8c;
    border-right: 0;
    background: #a5a5a3;
}
table {
    width: 1069px;
    border-collapse: collapse;
    table-layout: fixed;
}
th, td {
    height: 14px;
    padding: 0 2px;
    border: 1px solid #8f8f8f;
    border-width: 0 1px 1px 0;
    font-weight: 400;
    line-height: 13px;
    text-align: center;
}
th.row {
    width: 71px;
    background: #ececeb;
    text-align: left;
}
.plant {
    background: #b2bac1;
}
.comp {
    background: #6c7f90;
}
.pipe {
    background: #d9e4f2;
}
.col {
    background: #a9bedd;
}
td {
    background: #fdfdfc;
    text-align: left;
}
.cell {
    display: flex;
    justify-content: flex-end;
    height: 13px;
}
.cell button {
    width: 12px;
    background: #e4e4e4;
}
.cell svg {
    width: 8px;
    height: 8px;
}
.lower {
    height: 48px;
    border-top: 1px solid #d0d0ce;
    border-bottom: 5px solid #f4f4f3;
}
.viewtitle {
    height: 25px;
    border-top: 1px solid #8fa3b8;
    background: #a9c9e6;
}
.viewbar {
    height: 21px;
    background: #ececea;
}
.scene {
    flex: 1;
    width: 100%;
    min-height: 0;
    background: #b0c9e5;
}
.ground path {
    fill: none;
    stroke: #2f8fe8;
    stroke-width: 3;
}
.steel path {
    fill: none;
    stroke: #06335f;
}
.steel-fill {
    fill: #06335f;
}
.deck {
    fill: #0a84fa;
}
.hole {
    fill: #bdd2ea;
}
.wire {
    fill: none;
    stroke: #0a2c50;
    stroke-width: 3;
}
.treads path {
    fill: none;
    stroke: #1673cc;
    stroke-width: 9;
}
.pipe-run path {
    fill: none;
    stroke: #5f160e;
    stroke-linejoin: round;
}
.pipe-run .shine {
    stroke: #96301f;
}
.flange {
    fill: #74201a;
}
.status {
    display: flex;
    height: 5px;
    background: #eeeeec;
}
.status span {
    width: 114px;
    border-right: 1px solid #b4b4b2;
    background: #f8f8f6;
}
.status span:first-child {
    width: 226px;
}

.window {
    position: absolute;
    display: flex;
    flex-direction: column;
    border: 1px solid #c2c2c0;
    background: #f8f8f7;
    box-shadow: 0 0 4px rgba(0, 0, 0, .25);
}
.window header {
    display: grid;
    flex: none;
    grid-template-columns: 1fr auto 1fr;
    align-items: center;
    height: 23px;
}
.window h2 {
    font-family: "Open Sans", sans-serif;
    font-size: 12px;
    text-align: center;
}
.winicon {
    width: 14px;
    height: 14px;
}
.winbtns {
    display: flex;
    align-self: start;
    justify-content: flex-end;
}
.winbtns button {
    display: flex;
    align-items: center;
    justify-content: center;
    width: 23px;
    height: 16px;
    font-family: "DejaVu Sans", sans-serif;
    font-size: 10px;
    font-weight: 700;
}
.winbtns .close {
    width: 38px;
    background: #c8504a;
    color: #fff;
}
.box {
    width: 9px;
    height: 7px;
    border: 1px solid #555;
    border-top-width: 2px;
}
.inner {
    display: flex;
    flex: 1;
    flex-direction: column;
    border: 1px solid #d6d6d4;
    background: #ececeb;
}
.push {
    display: flex;
    align-items: center;
    justify-content: center;
    gap: 10px;
    width: 95px;
    height: 19px;
    border: 1px solid #b4b4b4;
    background: linear-gradient(#f2f2f1, #e2e2e1);
    font-size: 10px;
}
.push.main {
    border-color: #4a96e8;
}
.push svg {
    width: 16px;
    height: 14px;
}

.clash {
    top: 179px;
    left: -1px;
    width: 883px;
    height: 542px;
    padding-right: 4px;
    padding-bottom: 5px;
}
.clash .inner {
    padding: 3px 8px 5px 5px;
}
.jobmenu {
    display: flex;
    gap: 16px;
    height: 18px;
    padding-left: 6px;
    font-size: 10px;
}
.panes {
    display: flex;
    flex: 1;
    gap: 4px;
    min-height: 0;
}
.jobs {
    flex: none;
    width: 179px;
    border: 2px solid #5c5c5c;
    border-color: #5c5c5c #8c8c8c;
    background: #fdfdfc;
}
.jobtools {
    display: flex;
    align-items: center;
    height: 25px;
    border-bottom: 1px solid #b8b8b8;
    background: linear-gradient(#f4f4f3, #d2d2d0);
}
.jobtools .sep {
    margin: 0 1px;
}
.jobtools .tool svg {
    width: 18px;
    height: 18px;
}
.jobs li {
    display: flex;
    align-items: center;
    gap: 5px;
    height: 20px;
    padding-left: 2px;
}
.jobs li svg {
    width: 19px;
    height: 19px;
}
.jobs .picked {
    padding-left: 25px;
    background: #1e8af5;
    color: #fff;
    font-size: 10px;
    font-weight: 700;
}
.tabs {
    display: flex;
    flex: 1;
    flex-direction: column;
}
.tabrow {
    display: flex;
    height: 16px;
}
.tabrow span {
    width: 72px;
    border: 1px solid #a8a8a8;
    border-bottom: 0;
    background: #f2f2f1;
}
.tabrow span:first-child {
    width: 39px;
    background: #fff;
}
.tabbody {
    display: flex;
    flex: 1;
    gap: 5px;
    min-height: 0;
    padding: 3px 4px 7px 3px;
    border: 1px solid #a8a8a8;
    background: #ececeb;
}
.left {
    display: flex;
    flex: 1;
    flex-direction: column;
    gap: 4px;
}
.right {
    display: flex;
    flex: 1;
    flex-direction: column;
    gap: 4px;
    padding-bottom: 2px;
}
.card {
    background: #fdfdfc;
}
.grow {
    display: flex;
    flex: 1;
    padding: 40px 5px 22px;
}
.grow .list {
    flex: 1;
}
.list {
    border: 1px solid #8c8c8c;
    background: #fdfdfc;
}
.groups {
    display: flex;
    align-items: center;
    gap: 7px;
    height: 20px;
    padding: 0 5px 0 3px;
    border: 1px solid #b0b0ae;
    border-radius: 4px;
    background: linear-gradient(#e9e9e8, #cdcdcc);
    font-family: "Open Sans", sans-serif;
    font-size: 10px;
}
.groups svg {
    width: 12px;
    height: 10px;
}
.groups span {
    flex: 1;
    text-align: left;
}
.set {
    display: flex;
    flex: 1;
    flex-direction: column;
}
.sethead {
    display: flex;
    align-items: center;
    gap: 5px;
    height: 19px;
    padding: 0 6px 0 3px;
    background: linear-gradient(#eaf4fb, #d4eaf9 60%, #aad8f4 60%, #c0e2f6);
}
.sethead svg {
    width: 13px;
    height: 13px;
}
.sethead h3 {
    flex: 1;
    font-family: "DejaVu Sans", sans-serif;
    font-size: 9px;
    font-weight: 700;
}
.sethead button svg {
    width: 10px;
    height: 8px;
}
.line {
    display: flex;
    align-items: center;
    gap: 8px;
    height: 20px;
}
.set .line {
    margin-top: 3px;
    padding-left: 8px;
}
.line input {
    width: 51px;
    height: 17px;
    padding-left: 2px;
    border: 1px solid #9c9c9c;
    background: #fff;
}
.tick {
    display: flex;
    align-items: center;
    gap: 4px;
}
.tick input {
    display: flex;
    align-items: center;
    justify-content: center;
    width: 11px;
    height: 11px;
    border: 1px solid #555;
    appearance: none;
    background: #fff;
}
.tick input:checked::before {
    width: 3px;
    height: 6px;
    border: solid #111;
    border-width: 0 2px 2px 0;
    content: "";
    transform: rotate(40deg);
}
.set .tick {
    height: 20px;
    padding-left: 6px;
}
.set .list {
    display: flex;
    flex: 1;
    gap: 3px;
    margin: 1px 4px 20px;
    padding: 4px;
}
.set .list svg {
    width: 11px;
    height: 11px;
}
.clash .actions {
    display: flex;
    justify-content: flex-end;
    gap: 7px;
    padding: 7px 2px 0;
}
.clash .push.main {
    justify-content: flex-start;
    padding-left: 9px;
}

.progress {
    top: 229px;
    left: 134px;
    width: 390px;
    height: 144px;
    padding: 0 5px 5px;
}
.progress .winicon {
    margin-left: 2px;
}
.progress .close {
    width: 26px;
}
.progress .report {
    flex: 1;
    padding: 7px 13px 0;
    background: #fdfdfc;
}
.progress h3 {
    font-size: 12px;
    font-weight: 700;
    line-height: 16px;
}
.meter {
    height: 20px;
    margin-top: 1px;
    border: 1px solid #b4b4b4;
    background: #e1e1e0;
}
.meter i {
    display: block;
    height: 100%;
    background: #048c1a;
}
.progress .actions {
    display: flex;
    justify-content: flex-end;
    padding: 7px 13px 7px;
}
.progress .push {
    width: 79px;
}

.fit {
    top: 40px;
    left: 731px;
    width: 179px;
    height: 77px;
    padding: 0 5px 5px;
    background: #ededec;
}
.window.fit header {
    grid-template-columns: 14px 1fr auto;
}
.fit .close {
    background: #b9b9b8;
}
.fit .inner {
    padding: 2px 20px;
}
.fit .line {
    height: 18px;
    padding-left: 5px;
    gap: 6px;
}
.fit .pick {
    width: 85px;
}
.fit .pick select {
    height: 13px;
    line-height: 11px;
}
.pointer {
    position: absolute;
    top: 675px;
    left: 717px;
    width: 12px;
    height: 17px;
}
</style>
